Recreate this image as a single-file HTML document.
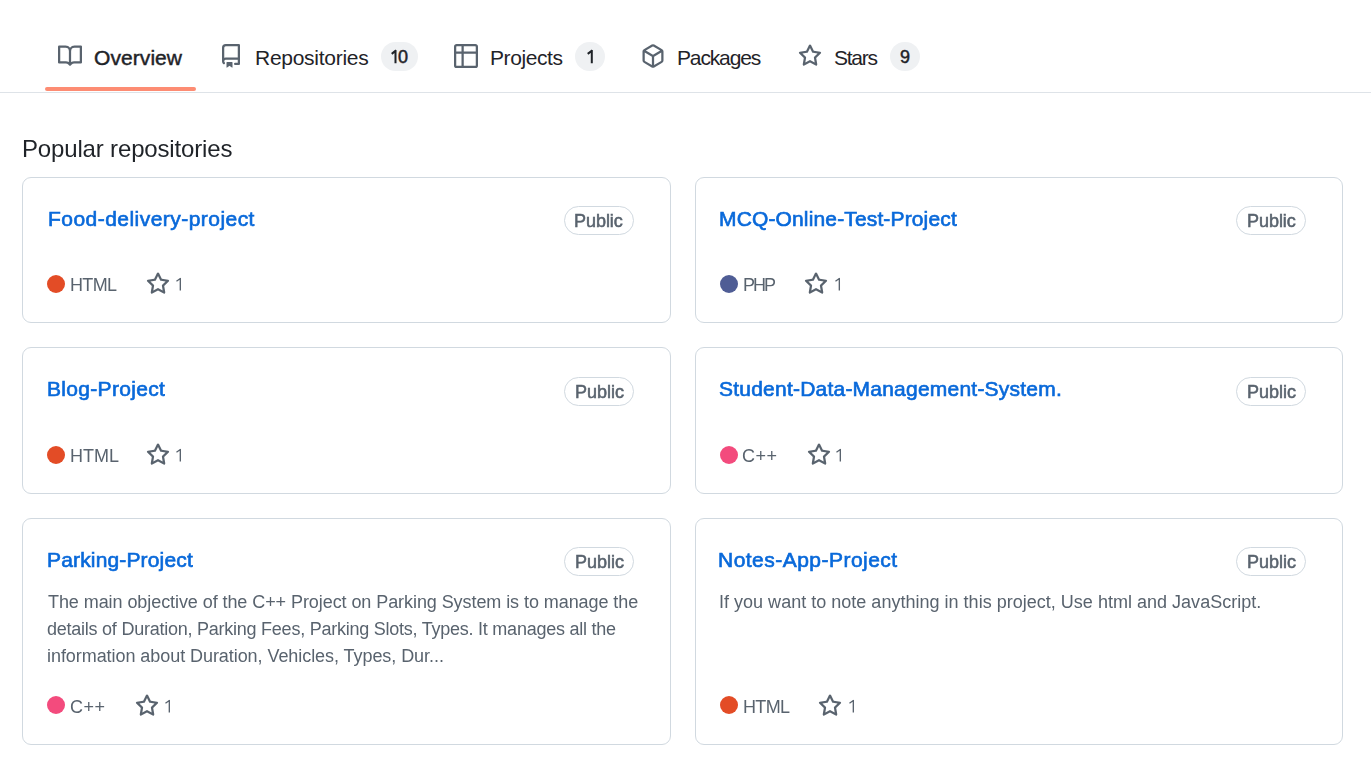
<!DOCTYPE html>
<html><head><meta charset="utf-8">
<style>
*{box-sizing:border-box;margin:0;padding:0}
html,body{width:1371px;height:782px;overflow:hidden;background:#fff}
body{font-family:"Liberation Sans",sans-serif;color:#1f2328;position:relative}
.a{position:absolute;white-space:nowrap}
svg{position:absolute;fill:#59636e}
.nav-t{font-size:21px;line-height:30px;color:#1f2328}
.cnt{position:absolute;height:29px;border-radius:15px;background:#eff1f3}
.ctxt{font-size:18px;line-height:27px;-webkit-text-stroke:0.5px #1f2328;color:#1f2328}
.hline{position:absolute;left:0;top:92px;width:1371px;height:1px;background:#dee3e8}
.uline{position:absolute;left:45px;top:87.2px;width:151px;height:3.6px;border-radius:3px;background:#fd8c73}
.card{position:absolute;border:1.5px solid #d1d9e0;border-radius:9px}
.title{font-size:21px;line-height:30px;-webkit-text-stroke:0.65px #0969da;color:#0969da}
.badge{position:absolute;height:29px;border:1.5px solid #d1d9e0;border-radius:15px}
.btxt{font-size:18px;line-height:27px;-webkit-text-stroke:0.55px #59636e;color:#59636e}
.meta{font-size:18px;line-height:27px;color:#59636e}
.dot{position:absolute;width:18px;height:18px;border-radius:50%}
.desc{font-size:18px;line-height:27px;color:#59636e}
.gs{will-change:transform}
</style></head><body>
<svg style="left:58px;top:44px" width="24" height="24" viewBox="0 0 16 16"><path d="M0 1.75A.75.75 0 0 1 .75 1h4.253c1.227 0 2.317.59 3 1.501A3.743 3.743 0 0 1 11.006 1h4.245a.75.75 0 0 1 .75.75v10.5a.75.75 0 0 1-.75.75h-4.507a2.25 2.25 0 0 0-1.591.659l-.622.621a.75.75 0 0 1-1.06 0l-.622-.621A2.25 2.25 0 0 0 5.258 13H.75a.75.75 0 0 1-.75-.75Zm7.251 10.324.004-5.073-.002-2.253A2.25 2.25 0 0 0 5.003 2.5H1.5v9h3.757a3.75 3.75 0 0 1 1.994.574ZM8.755 4.75l-.004 7.322a3.752 3.752 0 0 1 1.992-.572H14.5v-9h-3.495a2.25 2.25 0 0 0-2.25 2.25Z"/></svg>
<div class="a nav-t" id="n0" style="left:94.10px;top:43px;-webkit-text-stroke:0.45px #1f2328;letter-spacing:0.056px">Overview</div>
<svg style="left:219px;top:44px" width="24" height="24" viewBox="0 0 16 16"><path d="M2 2.5A2.5 2.5 0 0 1 4.5 0h8.75a.75.75 0 0 1 .75.75v12.5a.75.75 0 0 1-.75.75h-2.5a.75.75 0 0 1 0-1.5h1.75v-2h-8a1 1 0 0 0-.714 1.7.75.75 0 1 1-1.072 1.05A2.495 2.495 0 0 1 2 11.5Zm10.5-1h-8a1 1 0 0 0-1 1v6.708A2.486 2.486 0 0 1 4.5 9h8ZM5 12.25a.25.25 0 0 1 .25-.25h3.5a.25.25 0 0 1 .25.25v3.25a.25.25 0 0 1-.4.2l-1.45-1.087a.249.249 0 0 0-.3 0L5.4 15.7a.25.25 0 0 1-.4-.2Z"/></svg>
<div class="a nav-t" id="n1" style="left:255px;top:43px;letter-spacing:-0.273px">Repositories</div>
<div class="cnt" style="left:381px;top:42px;width:37px"></div>
<div class="a ctxt" id="c0" style="left:398.00px;top:44.4px;letter-spacing:0.000px">0</div>
<svg style="left:387.70px;top:46.90px;fill:none" width="11.50" height="19.20"><path d="M7.50 3.00V16.20M8.10 3.40L3.70 6.90" stroke="#1f2328" stroke-width="2.0"/></svg>
<svg style="left:454px;top:44px" width="24" height="24" viewBox="0 0 16 16"><path d="M0 1.75C0 .784.784 0 1.75 0h12.5C15.216 0 16 .784 16 1.75v12.5A1.75 1.75 0 0 1 14.25 16H1.75A1.75 1.75 0 0 1 0 14.25ZM6.5 6.5v8h7.75a.25.25 0 0 0 .25-.25V6.5Zm8-1.5V1.75a.25.25 0 0 0-.25-.25H6.5V5Zm-13 1.5v7.75c0 .138.112.25.25.25H5v-8ZM5 5V1.5H1.75a.25.25 0 0 0-.25.25V5Z"/></svg>
<div class="a nav-t" id="n2" style="left:490px;top:43px;letter-spacing:-0.425px">Projects</div>
<div class="cnt" style="left:575px;top:42px;width:30px"></div>
<svg style="left:583.80px;top:46.90px;fill:none" width="11.80" height="19.20"><path d="M7.80 3.00V16.20M8.40 3.40L3.70 6.90" stroke="#1f2328" stroke-width="2.0"/></svg>
<svg style="left:641px;top:44px" width="24" height="24" viewBox="0 0 16 16"><path d="m8.878.392 5.25 3.045c.54.314.872.89.872 1.514v6.098a1.75 1.75 0 0 1-.872 1.514l-5.25 3.045a1.75 1.75 0 0 1-1.756 0l-5.25-3.045A1.75 1.75 0 0 1 1 11.049V4.951c0-.624.332-1.201.872-1.514L7.122.392a1.75 1.75 0 0 1 1.756 0ZM7.875 1.69l-4.63 2.685L8 7.133l4.755-2.758-4.63-2.685a.248.248 0 0 0-.25 0ZM2.5 5.677v5.372c0 .09.047.171.125.216l4.625 2.683V8.432Zm6.25 8.271 4.625-2.683a.25.25 0 0 0 .125-.216V5.677L8.75 8.432Z"/></svg>
<div class="a nav-t" id="n3" style="left:677px;top:43px;letter-spacing:-1.142px">Packages</div>
<svg style="left:798px;top:44px" width="24" height="24" viewBox="0 0 16 16"><path d="M8 .25a.75.75 0 0 1 .673.418l1.882 3.815 4.21.612a.75.75 0 0 1 .416 1.279l-3.046 2.97.719 4.192a.751.751 0 0 1-1.088.791L8 12.347l-3.766 1.98a.75.75 0 0 1-1.088-.79l.72-4.194L.818 6.374a.75.75 0 0 1 .416-1.28l4.21-.611L7.327.668A.75.75 0 0 1 8 .25Zm0 2.445L6.615 5.5a.75.75 0 0 1-.564.41l-3.097.45 2.24 2.184a.75.75 0 0 1 .216.664l-.528 3.084 2.769-1.456a.75.75 0 0 1 .698 0l2.77 1.456-.53-3.084a.75.75 0 0 1 .216-.664l2.24-2.183-3.096-.45a.75.75 0 0 1-.564-.41L8 2.694Z"/></svg>
<div class="a nav-t" id="n4" style="left:834.00px;top:43px;letter-spacing:-1.250px">Stars</div>
<div class="cnt" style="left:890px;top:42px;width:30px"></div>
<div class="a ctxt" id="c2" style="left:900px;top:44.4px;letter-spacing:0.000px">9</div>
<div class="uline"></div><div class="hline"></div>
<div class="a  gs" id="pop" style="left:22.10px;top:134px;font-size:24px;line-height:30px;letter-spacing:-0.160px">Popular repositories</div>
<div class="card" style="left:22px;top:177px;width:649px;height:146px"></div>
<div class="card" style="left:695px;top:177px;width:648px;height:146px"></div>
<div class="card" style="left:22px;top:347px;width:649px;height:147px"></div>
<div class="card" style="left:695px;top:347px;width:648px;height:147px"></div>
<div class="card" style="left:22px;top:518px;width:649px;height:227px"></div>
<div class="card" style="left:695px;top:518px;width:648px;height:227px"></div>
<div class="a title gs" id="t0" style="left:47.70px;top:203.7px;letter-spacing:0.460px">Food-delivery-project</div>
<div class="badge" id="bb0" style="left:564px;top:206px;width:70px"></div>
<div class="a btxt gs" id="b0" style="left:573.50px;top:207.5px;letter-spacing:-0.040px">Public</div>
<div class="dot" id="dot0" style="left:47px;top:275px;background:#e34c26"></div>
<div class="a meta gs" id="l0" style="left:70.00px;top:272px;letter-spacing:-0.667px">HTML</div>
<svg style="left:146px;top:272px" width="24" height="24" viewBox="0 0 16 16"><path d="M8 .25a.75.75 0 0 1 .673.418l1.882 3.815 4.21.612a.75.75 0 0 1 .416 1.279l-3.046 2.97.719 4.192a.751.751 0 0 1-1.088.791L8 12.347l-3.766 1.98a.75.75 0 0 1-1.088-.79l.72-4.194L.818 6.374a.75.75 0 0 1 .416-1.28l4.21-.611L7.327.668A.75.75 0 0 1 8 .25Zm0 2.445L6.615 5.5a.75.75 0 0 1-.564.41l-3.097.45 2.24 2.184a.75.75 0 0 1 .216.664l-.528 3.084 2.769-1.456a.75.75 0 0 1 .698 0l2.77 1.456-.53-3.084a.75.75 0 0 1 .216-.664l2.24-2.183-3.096-.45a.75.75 0 0 1-.564-.41L8 2.694Z"/></svg>
<svg style="left:173.10px;top:275.10px;fill:none" width="11.00" height="18.60"><path d="M7.32 3.00V15.60M7.73 3.27L3.47 6.20" stroke="#59636e" stroke-width="1.35"/></svg>
<div class="a title gs" id="t1" style="left:718.90px;top:203.7px;letter-spacing:0.145px">MCQ-Online-Test-Project</div>
<div class="badge" id="bb1" style="left:1236px;top:206px;width:70px"></div>
<div class="a btxt gs" id="b1" style="left:1247.10px;top:207.5px;letter-spacing:-0.040px">Public</div>
<div class="dot" id="dot1" style="left:720px;top:275px;background:#4F5D95"></div>
<div class="a meta gs" id="l1" style="left:742.50px;top:272px;letter-spacing:-2.000px">PHP</div>
<svg style="left:804px;top:272px" width="24" height="24" viewBox="0 0 16 16"><path d="M8 .25a.75.75 0 0 1 .673.418l1.882 3.815 4.21.612a.75.75 0 0 1 .416 1.279l-3.046 2.97.719 4.192a.751.751 0 0 1-1.088.791L8 12.347l-3.766 1.98a.75.75 0 0 1-1.088-.79l.72-4.194L.818 6.374a.75.75 0 0 1 .416-1.28l4.21-.611L7.327.668A.75.75 0 0 1 8 .25Zm0 2.445L6.615 5.5a.75.75 0 0 1-.564.41l-3.097.45 2.24 2.184a.75.75 0 0 1 .216.664l-.528 3.084 2.769-1.456a.75.75 0 0 1 .698 0l2.77 1.456-.53-3.084a.75.75 0 0 1 .216-.664l2.24-2.183-3.096-.45a.75.75 0 0 1-.564-.41L8 2.694Z"/></svg>
<svg style="left:832.30px;top:275.10px;fill:none" width="11.00" height="18.60"><path d="M7.33 3.00V15.60M7.73 3.27L3.47 6.20" stroke="#59636e" stroke-width="1.35"/></svg>
<div class="a title gs" id="t2" style="left:46.70px;top:373.7px;letter-spacing:0.310px">Blog-Project</div>
<div class="badge" id="bb2" style="left:564px;top:377px;width:70px"></div>
<div class="a btxt gs" id="b2" style="left:574.5px;top:378.5px">Public</div>
<div class="dot" id="dot2" style="left:47px;top:446px;background:#e34c26"></div>
<div class="a meta gs" id="l2" style="left:70px;top:443px">HTML</div>
<svg style="left:146px;top:443px" width="24" height="24" viewBox="0 0 16 16"><path d="M8 .25a.75.75 0 0 1 .673.418l1.882 3.815 4.21.612a.75.75 0 0 1 .416 1.279l-3.046 2.97.719 4.192a.751.751 0 0 1-1.088.791L8 12.347l-3.766 1.98a.75.75 0 0 1-1.088-.79l.72-4.194L.818 6.374a.75.75 0 0 1 .416-1.28l4.21-.611L7.327.668A.75.75 0 0 1 8 .25Zm0 2.445L6.615 5.5a.75.75 0 0 1-.564.41l-3.097.45 2.24 2.184a.75.75 0 0 1 .216.664l-.528 3.084 2.769-1.456a.75.75 0 0 1 .698 0l2.77 1.456-.53-3.084a.75.75 0 0 1 .216-.664l2.24-2.183-3.096-.45a.75.75 0 0 1-.564-.41L8 2.694Z"/></svg>
<svg style="left:173.10px;top:446.10px;fill:none" width="11.00" height="18.60"><path d="M7.32 3.00V15.60M7.73 3.27L3.47 6.20" stroke="#59636e" stroke-width="1.35"/></svg>
<div class="a title gs" id="t3" style="left:719.30px;top:373.7px;letter-spacing:0.221px">Student-Data-Management-System.</div>
<div class="badge" id="bb3" style="left:1236px;top:377px;width:70px"></div>
<div class="a btxt gs" id="b3" style="left:1246.5px;top:378.5px">Public</div>
<div class="dot" id="dot3" style="left:720px;top:446px;background:#f34b7d"></div>
<div class="a meta gs" id="l3" style="left:741.50px;top:443px;letter-spacing:0.500px">C++</div>
<svg style="left:806.9px;top:443px" width="24" height="24" viewBox="0 0 16 16"><path d="M8 .25a.75.75 0 0 1 .673.418l1.882 3.815 4.21.612a.75.75 0 0 1 .416 1.279l-3.046 2.97.719 4.192a.751.751 0 0 1-1.088.791L8 12.347l-3.766 1.98a.75.75 0 0 1-1.088-.79l.72-4.194L.818 6.374a.75.75 0 0 1 .416-1.28l4.21-.611L7.327.668A.75.75 0 0 1 8 .25Zm0 2.445L6.615 5.5a.75.75 0 0 1-.564.41l-3.097.45 2.24 2.184a.75.75 0 0 1 .216.664l-.528 3.084 2.769-1.456a.75.75 0 0 1 .698 0l2.77 1.456-.53-3.084a.75.75 0 0 1 .216-.664l2.24-2.183-3.096-.45a.75.75 0 0 1-.564-.41L8 2.694Z"/></svg>
<svg style="left:832.70px;top:446.10px;fill:none" width="11.00" height="18.60"><path d="M7.33 3.00V15.60M7.73 3.27L3.47 6.20" stroke="#59636e" stroke-width="1.35"/></svg>
<div class="a title gs" id="t4" style="left:46.70px;top:545px;letter-spacing:0.157px">Parking-Project</div>
<div class="badge" id="bb4" style="left:564px;top:547px;width:70px"></div>
<div class="a btxt gs" id="b4" style="left:574.5px;top:548.5px">Public</div>
<div class="dot" id="dot4" style="left:47px;top:696px;background:#f34b7d"></div>
<div class="a meta gs" id="l4" style="left:70.00px;top:694.3px;letter-spacing:0.500px">C++</div>
<svg style="left:135px;top:694px" width="24" height="24" viewBox="0 0 16 16"><path d="M8 .25a.75.75 0 0 1 .673.418l1.882 3.815 4.21.612a.75.75 0 0 1 .416 1.279l-3.046 2.97.719 4.192a.751.751 0 0 1-1.088.791L8 12.347l-3.766 1.98a.75.75 0 0 1-1.088-.79l.72-4.194L.818 6.374a.75.75 0 0 1 .416-1.28l4.21-.611L7.327.668A.75.75 0 0 1 8 .25Zm0 2.445L6.615 5.5a.75.75 0 0 1-.564.41l-3.097.45 2.24 2.184a.75.75 0 0 1 .216.664l-.528 3.084 2.769-1.456a.75.75 0 0 1 .698 0l2.77 1.456-.53-3.084a.75.75 0 0 1 .216-.664l2.24-2.183-3.096-.45a.75.75 0 0 1-.564-.41L8 2.694Z"/></svg>
<svg style="left:161.90px;top:697.40px;fill:none" width="11.00" height="18.60"><path d="M7.32 3.00V15.60M7.73 3.27L3.47 6.20" stroke="#59636e" stroke-width="1.35"/></svg>
<div class="a title gs" id="t5" style="left:718.10px;top:545px;letter-spacing:0.476px">Notes-App-Project</div>
<div class="badge" id="bb5" style="left:1236px;top:547px;width:70px"></div>
<div class="a btxt gs" id="b5" style="left:1246.5px;top:548.5px">Public</div>
<div class="dot" id="dot5" style="left:720px;top:696px;background:#e34c26"></div>
<div class="a meta gs" id="l5" style="left:742.50px;top:694.3px;letter-spacing:-0.667px">HTML</div>
<svg style="left:818px;top:694px" width="24" height="24" viewBox="0 0 16 16"><path d="M8 .25a.75.75 0 0 1 .673.418l1.882 3.815 4.21.612a.75.75 0 0 1 .416 1.279l-3.046 2.97.719 4.192a.751.751 0 0 1-1.088.791L8 12.347l-3.766 1.98a.75.75 0 0 1-1.088-.79l.72-4.194L.818 6.374a.75.75 0 0 1 .416-1.28l4.21-.611L7.327.668A.75.75 0 0 1 8 .25Zm0 2.445L6.615 5.5a.75.75 0 0 1-.564.41l-3.097.45 2.24 2.184a.75.75 0 0 1 .216.664l-.528 3.084 2.769-1.456a.75.75 0 0 1 .698 0l2.77 1.456-.53-3.084a.75.75 0 0 1 .216-.664l2.24-2.183-3.096-.45a.75.75 0 0 1-.564-.41L8 2.694Z"/></svg>
<svg style="left:845.90px;top:697.40px;fill:none" width="11.00" height="18.60"><path d="M7.33 3.00V15.60M7.73 3.27L3.47 6.20" stroke="#59636e" stroke-width="1.35"/></svg>
<div class="a desc gs" id="d1" style="left:47.50px;top:589px;letter-spacing:-0.072px">The main objective of the C++ Project on Parking System is to manage the</div>
<div class="a desc gs" id="d2" style="left:46.50px;top:616px;letter-spacing:-0.242px">details of Duration, Parking Fees, Parking Slots, Types. It manages all the</div>
<div class="a desc gs" id="d3" style="left:46.50px;top:643px;letter-spacing:-0.060px">information about Duration, Vehicles, Types, Dur...</div>
<div class="a desc gs" id="d4" style="left:718.50px;top:589px;letter-spacing:0.014px">If you want to note anything in this project, Use html and JavaScript.</div>
</body></html>
